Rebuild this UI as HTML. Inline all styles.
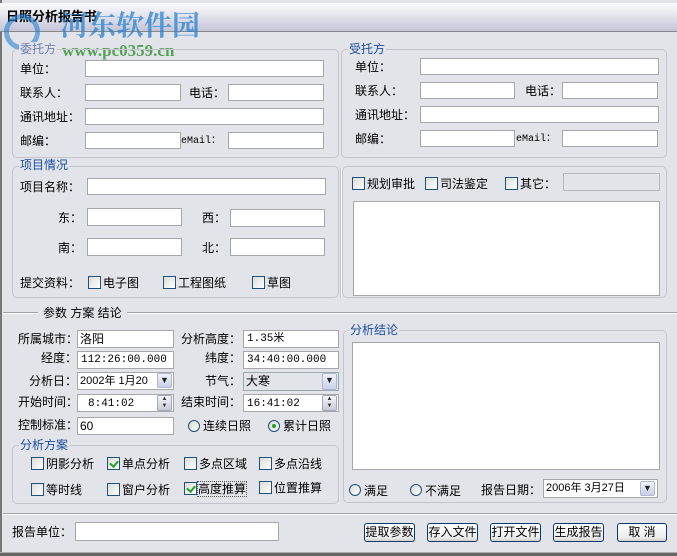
<!DOCTYPE html>
<html><head><meta charset="utf-8">
<style>
*{margin:0;padding:0;box-sizing:border-box}
body{width:677px;height:556px;background:#fff;position:relative;overflow:hidden;font-family:"Liberation Sans","Noto Sans CJK SC",sans-serif;font-size:12px;color:#000}
#win{position:absolute;left:0;top:0;width:677px;height:556px;background:#e3e3ea}
.a{position:absolute;white-space:nowrap;line-height:14px}
.in{position:absolute;background:#fff;border:1px solid #a7a6aa;white-space:nowrap;overflow:hidden}
.mono{font-family:'Liberation Mono',monospace;font-size:11px}
.grp{position:absolute;border:1px solid #c4c4cc;border-radius:5px}
.gl{position:absolute;color:#1b4ea0;background:#e3e3ea;padding:0 1px;line-height:14px}
.cb{position:absolute;width:13px;height:13px;border:1px solid #1c5180;background:linear-gradient(135deg,#dcdcd7,#fff)}
.cb.k::after{content:"";position:absolute;left:3px;top:1px;width:4px;height:6px;border:solid #21a121;border-width:0 2px 2px 0;transform:rotate(40deg)}
.rd{position:absolute;width:12px;height:12px;border:1px solid #1c5180;border-radius:50%;background:linear-gradient(135deg,#dcdcd7,#fff)}
.rd.k::after{content:"";position:absolute;left:3px;top:3px;width:4px;height:4px;border-radius:50%;background:#21a121}
.dd{position:absolute;width:15px;height:15px;border:1px solid #b0b8d0;border-radius:2px;background:linear-gradient(#f0f2fa,#c8d0e8);font-size:9px;text-align:center;line-height:13px;color:#222}
.sp{position:absolute;width:15px;height:16px;border:1px solid #a0a8c0;border-radius:2px;background:linear-gradient(#f4f4f8,#c8ccd8);font-size:6px;text-align:center;line-height:7px;color:#333}
.hl{position:absolute;height:2px;border-top:1px solid #a0a0a8;border-bottom:1px solid #fff}
.bt{position:absolute;height:19px;border:1px solid #003c74;border-radius:3px;background:linear-gradient(#fff,#ececec 80%,#d6d0c5);text-align:center;line-height:17px;font-size:12px}
</style></head><body>
<div id="win">
<div style="position:absolute;left:0;top:0;width:2px;height:556px;background:#777"></div>
<div style="position:absolute;left:0;top:552px;width:677px;height:4px;background:#666;border-top:1px solid #aaa"></div>
<div style="position:absolute;left:0;top:3px;width:677px;height:29px;background:linear-gradient(#fafafc,#e6e6ee 40%,#c4c6d8);border-bottom:1px solid #888"></div>
<div class="a" style="left:6px;top:10px;font-weight:bold;font-size:13px">日照分析报告书</div>
<div class="a" style="left:60px;top:9px;font-size:28px;line-height:30px;font-weight:bold;color:rgba(40,130,210,0.75);font-family:'Noto Serif CJK SC',serif">河东软件园</div>
<div class="a" style="left:62px;top:44px;font-size:17px;font-weight:bold;color:rgba(60,150,60,0.85);font-family:'Liberation Serif',serif">www.pc0359.cn</div>
<div style="position:absolute;left:4px;top:14px;width:36px;height:36px;border-radius:50%;border:5px solid rgba(40,130,210,0.6)"></div>

<div class="grp" style="left:12px;top:49px;width:327px;height:109px"></div>
<div class="gl" style="left:19px;top:42px;color:#6a7fb0">委托方</div>
<div class="a" style="left:20px;top:62px">单位：</div><div class="in" style="left:85px;top:60px;width:239px;height:17px"></div>
<div class="a" style="left:20px;top:86px">联系人：</div><div class="in" style="left:85px;top:84px;width:96px;height:17px"></div>
<div class="a" style="left:189px;top:86px">电话：</div><div class="in" style="left:228px;top:84px;width:96px;height:17px"></div>
<div class="a" style="left:20px;top:110px">通讯地址：</div><div class="in" style="left:85px;top:108px;width:239px;height:17px"></div>
<div class="a" style="left:20px;top:134px">邮编：</div><div class="in" style="left:85px;top:132px;width:96px;height:17px"></div>
<div class="a" style="left:181px;top:135px;font-family:'Liberation Mono',monospace;font-size:10px">eMail：</div><div class="in" style="left:228px;top:132px;width:96px;height:17px"></div>

<div class="grp" style="left:341px;top:49px;width:326px;height:109px"></div>
<div class="gl" style="left:348px;top:42px">受托方</div>
<div class="a" style="left:355px;top:60px">单位：</div><div class="in" style="left:420px;top:58px;width:239px;height:17px"></div>
<div class="a" style="left:355px;top:84px">联系人：</div><div class="in" style="left:420px;top:82px;width:95px;height:17px"></div>
<div class="a" style="left:525px;top:84px">电话：</div><div class="in" style="left:562px;top:82px;width:96px;height:17px"></div>
<div class="a" style="left:355px;top:108px">通讯地址：</div><div class="in" style="left:420px;top:106px;width:239px;height:17px"></div>
<div class="a" style="left:355px;top:132px">邮编：</div><div class="in" style="left:420px;top:130px;width:95px;height:17px"></div>
<div class="a" style="left:516px;top:133px;font-family:'Liberation Mono',monospace;font-size:10px">eMail：</div><div class="in" style="left:562px;top:130px;width:96px;height:17px"></div>

<div class="grp" style="left:12px;top:166px;width:327px;height:132px"></div>
<div class="gl" style="left:19px;top:158px">项目情况</div>
<div class="grp" style="left:342px;top:166px;width:325px;height:132px"></div>
<div style="position:absolute;left:340px;top:168px;width:2px;height:130px;background:#fff;border-left:1px solid #c4c4cc"></div>
<div class="a" style="left:20px;top:180px">项目名称：</div><div class="in" style="left:87px;top:178px;width:239px;height:17px"></div>
<div class="a" style="left:58px;top:211px">东：</div><div class="in" style="left:87px;top:208px;width:95px;height:18px"></div>
<div class="a" style="left:202px;top:211px">西：</div><div class="in" style="left:230px;top:209px;width:95px;height:18px"></div>
<div class="a" style="left:58px;top:241px">南：</div><div class="in" style="left:87px;top:238px;width:95px;height:18px"></div>
<div class="a" style="left:202px;top:241px">北：</div><div class="in" style="left:230px;top:238px;width:95px;height:18px"></div>
<div class="a" style="left:20px;top:276px">提交资料：</div>
<div class="cb" style="left:88px;top:276px"></div><div class="a" style="left:103px;top:276px">电子图</div>
<div class="cb" style="left:163px;top:276px"></div><div class="a" style="left:178px;top:276px">工程图纸</div>
<div class="cb" style="left:252px;top:276px"></div><div class="a" style="left:267px;top:276px">草图</div>
<div class="cb" style="left:352px;top:177px"></div><div class="a" style="left:367px;top:177px">规划审批</div>
<div class="cb" style="left:425px;top:177px"></div><div class="a" style="left:440px;top:177px">司法鉴定</div>
<div class="cb" style="left:505px;top:177px"></div><div class="a" style="left:520px;top:177px">其它：</div>
<div class="in" style="left:563px;top:173px;width:97px;height:18px;background:#e3e3ea;border-color:#b8b8c0"></div>
<div class="in" style="left:353px;top:201px;width:307px;height:95px"></div>

<div class="hl" style="left:3px;top:312px;width:674px"></div>
<div class="a" style="left:38px;top:306px;background:#e3e3ea;padding:0 5px">参数 方案 结论</div>

<div class="a" style="left:18px;top:332px">所属城市：</div><div class="in" style="left:77px;top:330px;width:97px;height:18px;padding-left:2px;line-height:16px">洛阳</div>
<div class="a" style="left:181px;top:332px">分析高度：</div><div class="in mono" style="left:243px;top:330px;width:96px;height:18px;padding-left:3px;line-height:16px">1.35米</div>
<div class="a" style="left:41px;top:351px">经度：</div><div class="in mono" style="left:77px;top:351px;width:97px;height:18px;padding-left:3px;line-height:17px">112:26:00.000</div>
<div class="a" style="left:205px;top:351px">纬度：</div><div class="in mono" style="left:243px;top:351px;width:96px;height:18px;padding-left:3px;line-height:17px">34:40:00.000</div>
<div class="a" style="left:29px;top:374px">分析日：</div><div class="in" style="left:77px;top:372px;width:97px;height:18px;padding-left:2px;line-height:16px;font-size:11px">2002年 1月20</div>
<div class="dd" style="left:157px;top:373px">▼</div>
<div class="a" style="left:205px;top:374px">节气：</div><div class="in" style="left:243px;top:372px;width:96px;height:19px;padding-left:2px;line-height:16px;background:#e3e3ea;border-color:#9aa">大寒</div>
<div class="dd" style="left:322px;top:373px;height:17px">▼</div>
<div class="a" style="left:18px;top:395px">开始时间：</div><div class="in mono" style="left:77px;top:394px;width:97px;height:18px;padding-left:10px;line-height:18px">8:41:02</div>
<div class="sp" style="left:157px;top:395px">▲<br>▼</div>
<div class="a" style="left:181px;top:395px">结束时间：</div><div class="in mono" style="left:243px;top:394px;width:96px;height:18px;padding-left:3px;line-height:18px">16:41:02</div>
<div class="sp" style="left:322px;top:395px">▲<br>▼</div>
<div class="a" style="left:18px;top:418px">控制标准：</div><div class="in" style="left:77px;top:417px;width:97px;height:18px;padding-left:2px;line-height:17px">60</div>
<div class="rd" style="left:188px;top:420px"></div><div class="a" style="left:203px;top:419px">连续日照</div>
<div class="rd k" style="left:268px;top:420px"></div><div class="a" style="left:283px;top:419px">累计日照</div>

<div class="grp" style="left:12px;top:445px;width:327px;height:59px"></div>
<div class="gl" style="left:19px;top:438px">分析方案</div>
<div class="cb" style="left:31px;top:457px"></div><div class="a" style="left:46px;top:457px">阴影分析</div>
<div class="cb k" style="left:107px;top:457px"></div><div class="a" style="left:122px;top:457px">单点分析</div>
<div class="cb" style="left:184px;top:457px"></div><div class="a" style="left:199px;top:457px">多点区域</div>
<div class="cb" style="left:259px;top:457px"></div><div class="a" style="left:274px;top:457px">多点沿线</div>
<div class="cb" style="left:31px;top:483px"></div><div class="a" style="left:46px;top:483px">等时线</div>
<div class="cb" style="left:107px;top:483px"></div><div class="a" style="left:122px;top:483px">窗户分析</div>
<div class="cb k" style="left:184px;top:482px"></div><div class="a" style="left:198px;top:482px;outline:1px dotted #555">高度推算</div>
<div class="cb" style="left:259px;top:481px"></div><div class="a" style="left:274px;top:481px">位置推算</div>

<div class="grp" style="left:343px;top:330px;width:324px;height:173px"></div>
<div class="gl" style="left:349px;top:323px">分析结论</div>
<div class="in" style="left:352px;top:342px;width:308px;height:128px"></div>
<div class="rd" style="left:349px;top:484px"></div><div class="a" style="left:364px;top:484px">满足</div>
<div class="rd" style="left:410px;top:484px"></div><div class="a" style="left:425px;top:484px">不满足</div>
<div class="a" style="left:481px;top:483px">报告日期：</div>
<div class="in" style="left:543px;top:479px;width:115px;height:19px;padding-left:2px;line-height:17px;font-size:11px">2006年 3月27日</div>
<div class="dd" style="left:640px;top:481px">▼</div>

<div class="hl" style="left:3px;top:513px;width:674px"></div>
<div class="a" style="left:12px;top:525px">报告单位：</div><div class="in" style="left:75px;top:522px;width:204px;height:19px"></div>
<div class="bt" style="left:364px;top:523px;width:51px">提取参数</div>
<div class="bt" style="left:427px;top:523px;width:51px">存入文件</div>
<div class="bt" style="left:490px;top:523px;width:51px">打开文件</div>
<div class="bt" style="left:553px;top:523px;width:51px">生成报告</div>
<div class="bt" style="left:617px;top:523px;width:50px">取 消</div>
</div>
</body></html>
